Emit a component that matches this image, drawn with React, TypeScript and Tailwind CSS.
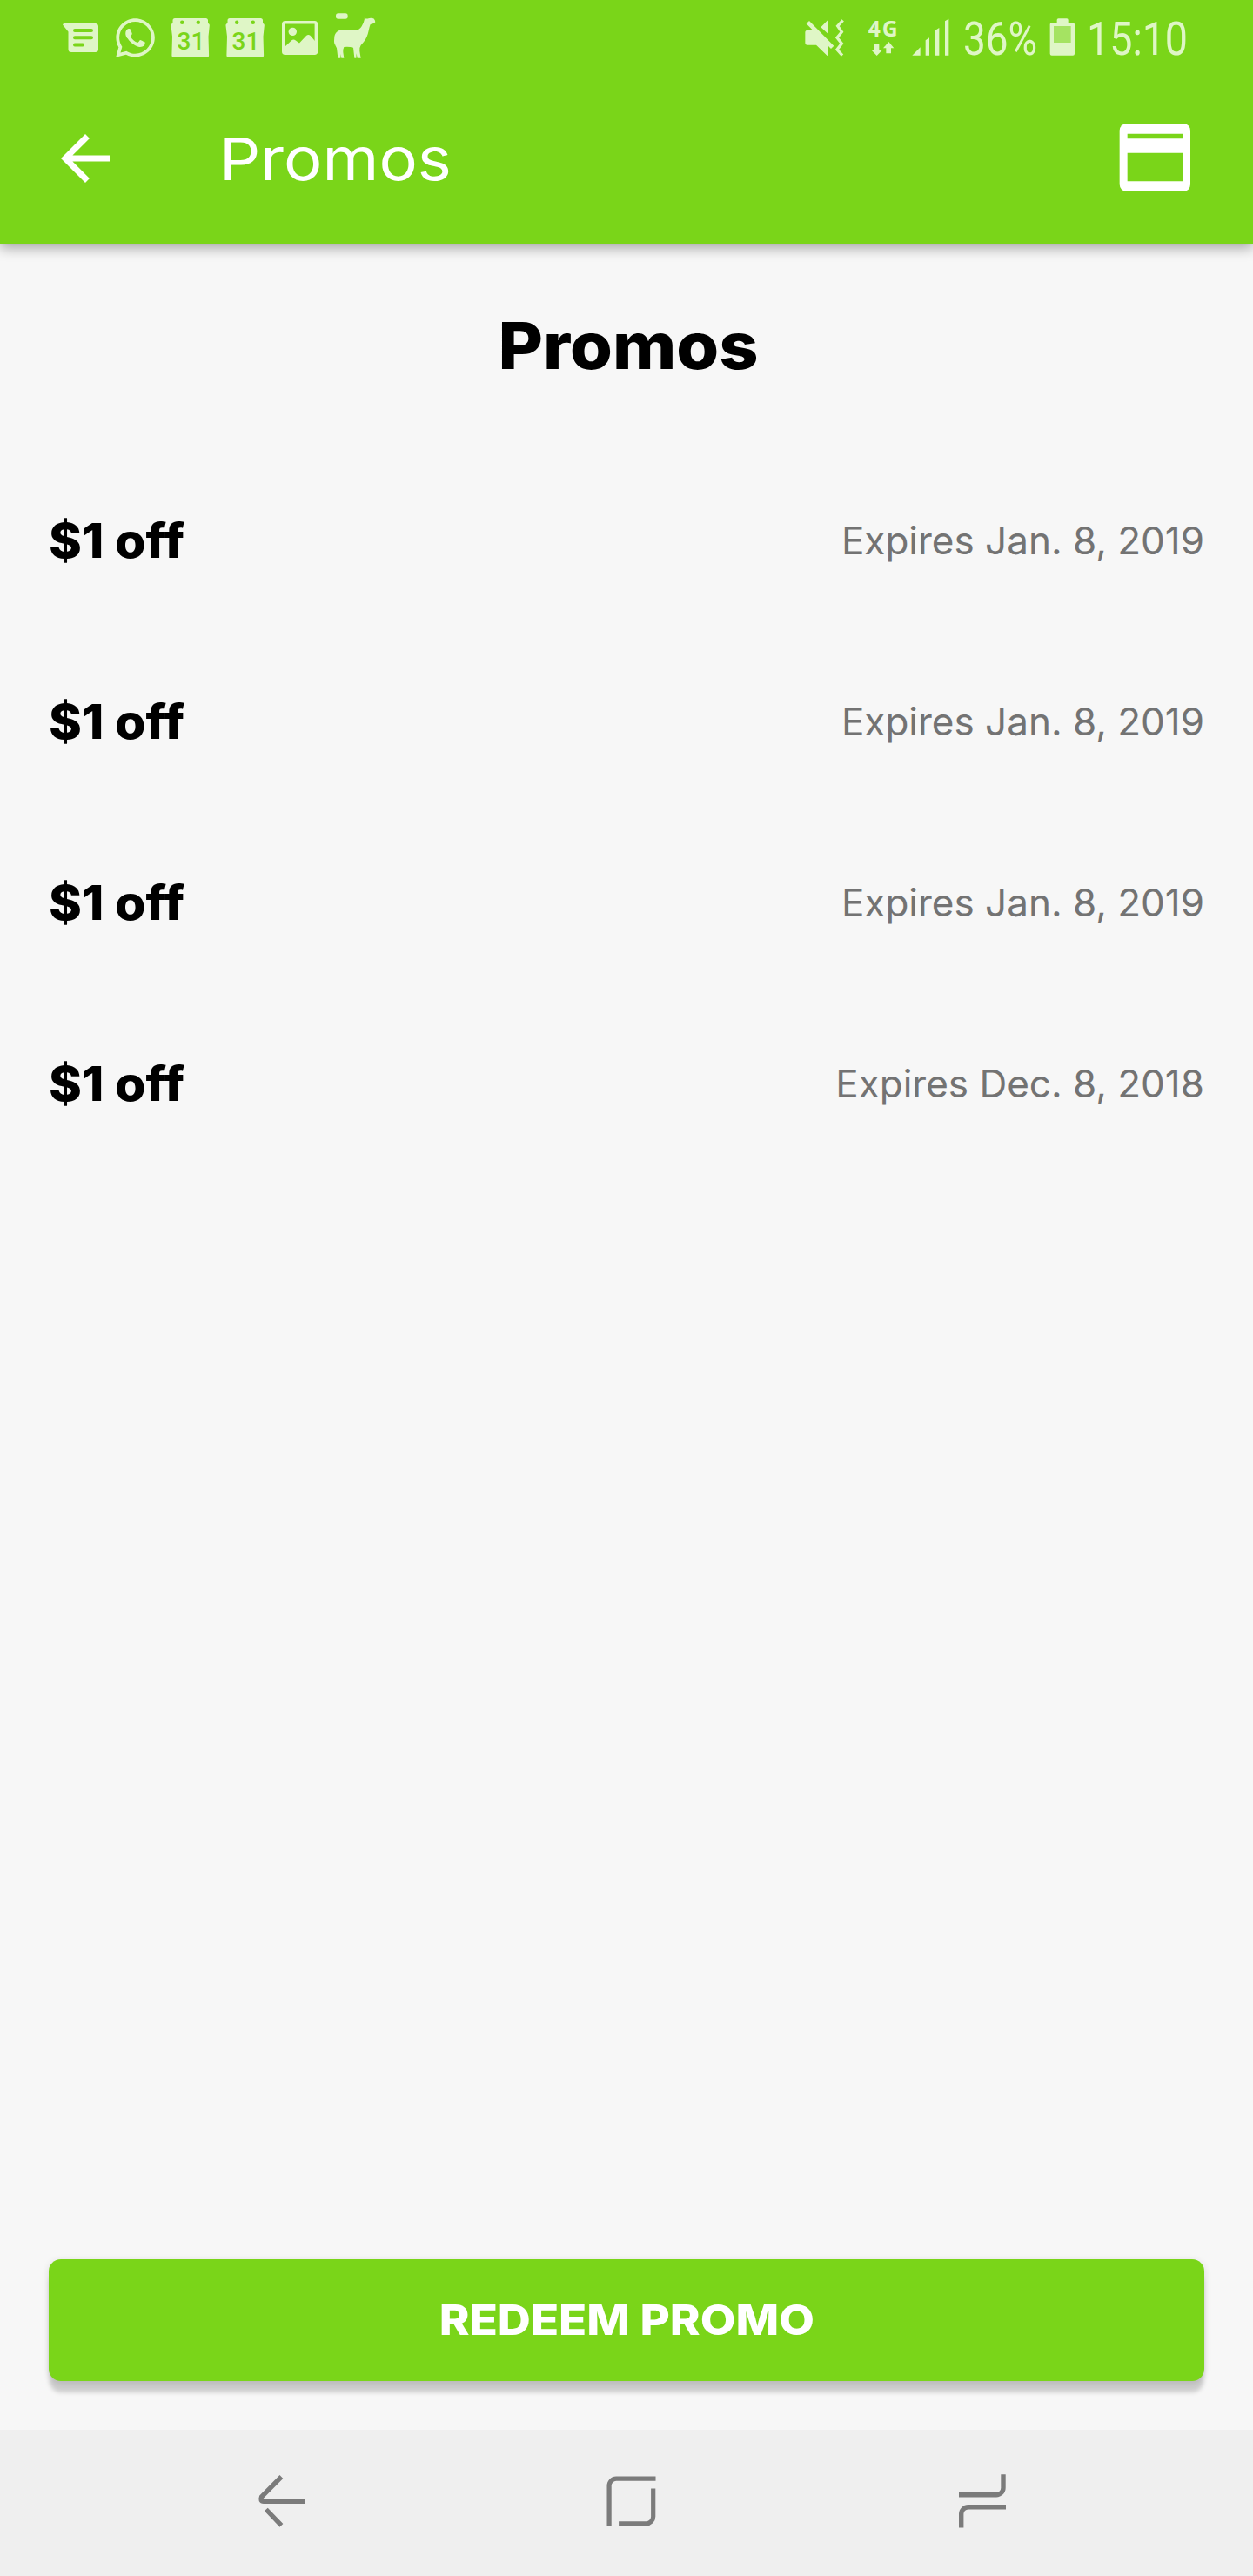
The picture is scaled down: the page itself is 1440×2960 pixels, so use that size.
import React from 'react';
import { FaWhatsapp } from 'react-icons/fa';
import { MdArrowBack } from 'react-icons/md';

const promos = [
  { id: 1, label: '$1 off', expires: 'Expires Jan. 8, 2019' },
  { id: 2, label: '$1 off', expires: 'Expires Jan. 8, 2019' },
  { id: 3, label: '$1 off', expires: 'Expires Jan. 8, 2019' },
  { id: 4, label: '$1 off', expires: 'Expires Dec. 8, 2018' },
];

const MessageIcon: React.FC = () => (
  <svg className="w-[63px] h-[72px]" viewBox="0 0 63 72" fill="currentColor">
    <path d="M12 27H48.5a3.5 3.5 0 0 1 3.5 3.5V56.5a3.5 3.5 0 0 1-3.5 3.5H21a3.5 3.5 0 0 1-3.5-3.5V36.5L11 28.5z" />
    <path className="stroke-[#7ad519]" strokeWidth="4" strokeLinecap="round" d="M25 35H44M25 43.3H44M25 51.5H34" />
  </svg>
);

const CalendarIcon: React.FC = () => (
  <svg className="w-[63px] h-[72px]" viewBox="0 0 63 72" fill="currentColor">
    <path d="M14 21H49.5a2.5 2.5 0 0 1 2.5 2.5V27c1.5 .3 2 1.2 1.800 2.600L52.500 42l.6 21.500a2.500 2.500 0 0 1-2.500 2.500H12.900a2.500 2.500 0 0 1-2.500-2.500L11 42 9.500 29.600c-.2-1.400.4-2.300 2-2.600v-3.500a2.500 2.500 0 0 1 2.500-2.500z" />
    <circle className="fill-[#7ad519]" cx="22.2" cy="25.8" r="2.2" />
    <circle className="fill-[#7ad519]" cx="40.8" cy="25.8" r="2.2" />
    <text x="16.5" y="57" className="fill-[#7ad519] font-[Roboto] font-medium text-[28px]">31</text>
  </svg>
);

const PictureIcon: React.FC = () => (
  <svg className="w-[63px] h-[72px]" viewBox="0 0 63 72" fill="currentColor">
    <rect x="12.8" y="25.8" width="37.6" height="35.4" rx="2" fill="none" stroke="currentColor" strokeWidth="3.6" />
    <circle cx="23.3" cy="36.4" r="4.7" />
    <path d="M14 54l8-7.6q2.4-2 4.8 0l4.2 3.2 8-8.6q2.4-2 4.8 0L51 49.6V62H14z" />
  </svg>
);

const LlamaIcon: React.FC = () => (
  <svg className="w-[63px] h-[72px]" viewBox="978 0 189 216" fill="currentColor">
    <rect x="1008" y="46" width="41" height="19" rx="8" />
    <path d="M1106 62q8 4 14 2 8-3 18 0 7 7 6 12-2 5-9 6l-8 2q-4 10-6 22c-3 16-9 28-15 36q-6 8-12 14-5 7-4 20 2 14 4 24h-12l-3-16-1 16h-6l-4-36q-16-4-32-2-4 8-3 18l3 20h-9l-2-14-1 14h-9q-2-18-4-34-6-9-7-18l-1 8q-2-16 0-30c3-14 13-22 26-23q24-1 44 2 16 0 24-14 8-14 10-26z" />
  </svg>
);

const MuteIcon: React.FC = () => (
  <svg className="w-12 h-[72px]" viewBox="72 0 144 216" fill="currentColor">
    <path d="M84 104h26l46 48v40h-4l-38-37H84q-8 0-8-8v-35q0-8 8-8zM130 94l22-23q4-3 4 2v45z" />
    <path fill="none" stroke="currentColor" strokeWidth="14" d="M85 77l85 86" />
    <path fill="none" stroke="currentColor" strokeWidth="10" d="M206 70l-18 20 14 20-16 20 16 20-16 21 18 20" />
  </svg>
);

const NetworkIcon: React.FC = () => (
  <svg className="ml-6 w-[39px] h-[72px]" viewBox="288 0 117 216" fill="currentColor">
    <text x="293" y="126" textLength="102" className="font-['Open_Sans'] font-bold text-[74px]">4G</text>
    <path d="M315 153h16v20h10l-18 19-18-19h10zM364 144l18 22h-10v18h-17v-18h-10z" />
  </svg>
);

const SignalIcon: React.FC = () => (
  <svg className="ml-3 w-[45px] h-[72px]" viewBox="441 0 135 216" fill="currentColor">
    <path d="M445 191l28-28v28zM491 139l13-9v61h-13zM525 104l13-8v95h-13zM558 73l13-8v126h-13z" />
  </svg>
);

const BatteryIcon: React.FC = () => (
  <svg className="ml-[14px] w-[30px] h-[72px]" viewBox="918 0 90 216" fill="currentColor">
    <path d="M944 78V69q0-5 5-5h29q5 0 5 5v9h16q6 0 6 6v101q0 6-6 6h-73q-6 0-6-6V84q0-6 6-6z" />
    <rect className="fill-[#a5e362]" x="933" y="90" width="59" height="57" />
  </svg>
);

const CardIcon: React.FC = () => (
  <svg className="-mt-0.5 w-[83px] h-[78px]" viewBox="138 66 249 234" fill="white">
    <rect x="140" y="66" width="244" height="234" rx="24" />
    <path className="fill-[#7ad519]" d="M167 101h191v17H167zM167 167h191v98H167z" />
  </svg>
);

const StatusBar: React.FC = () => (
  <div className="flex h-[72px] justify-between pl-[61px] pr-[75px] text-[#dff6c6]">
    <div className="flex items-center">
      <MessageIcon />
      <div className="flex w-[63px] justify-center pt-[15px]">
        <FaWhatsapp size={51} />
      </div>
      <CalendarIcon />
      <CalendarIcon />
      <PictureIcon />
      <LlamaIcon />
    </div>
    <div className="flex items-center font-[Roboto] text-[54px] leading-[54px] whitespace-nowrap">
      <MuteIcon />
      <NetworkIcon />
      <SignalIcon />
      <span className="ml-[15px] w-[85px] pt-[17px] origin-left scale-x-[0.85]">36%</span>
      <BatteryIcon />
      <span className="ml-[13px] w-[116px] pt-[17px] origin-left scale-x-[0.863]">15:10</span>
    </div>
  </div>
);

const Header: React.FC = () => (
  <header className="h-[280px] shrink-0 bg-[#7ad519] shadow-[0_5px_14px_rgba(0,0,0,0.33)]">
    <StatusBar />
    <div className="flex h-[208px] items-center pt-3 pl-14 pr-[71px] text-white">
      <MdArrowBack size={84} />
      <span className="ml-[112px] flex-1 origin-left scale-x-[1.09] text-[68px] leading-none">Promos</span>
      <CardIcon />
    </div>
  </header>
);

const NavBar: React.FC = () => (
  <nav className="flex h-[168px] shrink-0 items-center gap-[342px] bg-[#efefef] pb-[5px] pl-[294px] text-[#7b7b7b]">
    <svg className="w-[60px] h-[72px]" viewBox="0 0 60 72" fill="none" stroke="currentColor" strokeWidth="5.4">
      <path d="M29.4 8L6.6 31q-2 5.2 2.4 5.2H57M11.8 45.5l17.6 18.3" />
    </svg>
    <svg className="w-[60px] h-[72px]" viewBox="0 0 60 72" fill="none" stroke="currentColor" strokeWidth="5.2">
      <path d="M4.1 64.8V18.2a8 8 0 0 1 8-8h45.4M54.7 21.5V53.8a8 8 0 0 1-8 8H15.1" />
    </svg>
    <svg className="w-[60px] h-[72px]" viewBox="0 0 60 72" fill="none" stroke="currentColor" strokeWidth="5.4">
      <path d="M55 5.2v15.6a8 8 0 0 1-8 8H4M58 42.8H14.7a8 8 0 0 0-8 8v15.7" />
    </svg>
  </nav>
);

const App: React.FC = () => {
  return (
    <div className="flex h-[2960px] w-full flex-col bg-[#f7f7f7] font-[Inter,sans-serif]">
      <Header />
      <main className="flex flex-1 flex-col px-14 pb-14">
        <h1 className="flex h-[237px] items-center justify-center pb-[3px] pl-1 text-[74px] font-extrabold text-black">
          <span className="scale-x-[1.068]">Promos</span>
        </h1>
        <ul>
          {promos.map((promo) => (
            <li key={promo.id} className="flex h-[208px] items-center justify-between">
              <span className="origin-left scale-x-[1.045] text-[55px] font-extrabold text-black">{promo.label}</span>
              <span className="text-[44px] text-[#737373]">{promo.expires}</span>
            </li>
          ))}
        </ul>
        <button className="mt-auto flex h-[140px] items-center justify-center rounded-[14px] bg-[#7ad519] text-[48px] font-extrabold text-white shadow-[0_14px_5px_-1px_rgba(0,0,0,0.17),0_2px_8px_rgba(0,0,0,0.12)]">
          <span className="scale-x-[1.098]">REDEEM PROMO</span>
        </button>
      </main>
      <NavBar />
    </div>
  );
};

export default App;
